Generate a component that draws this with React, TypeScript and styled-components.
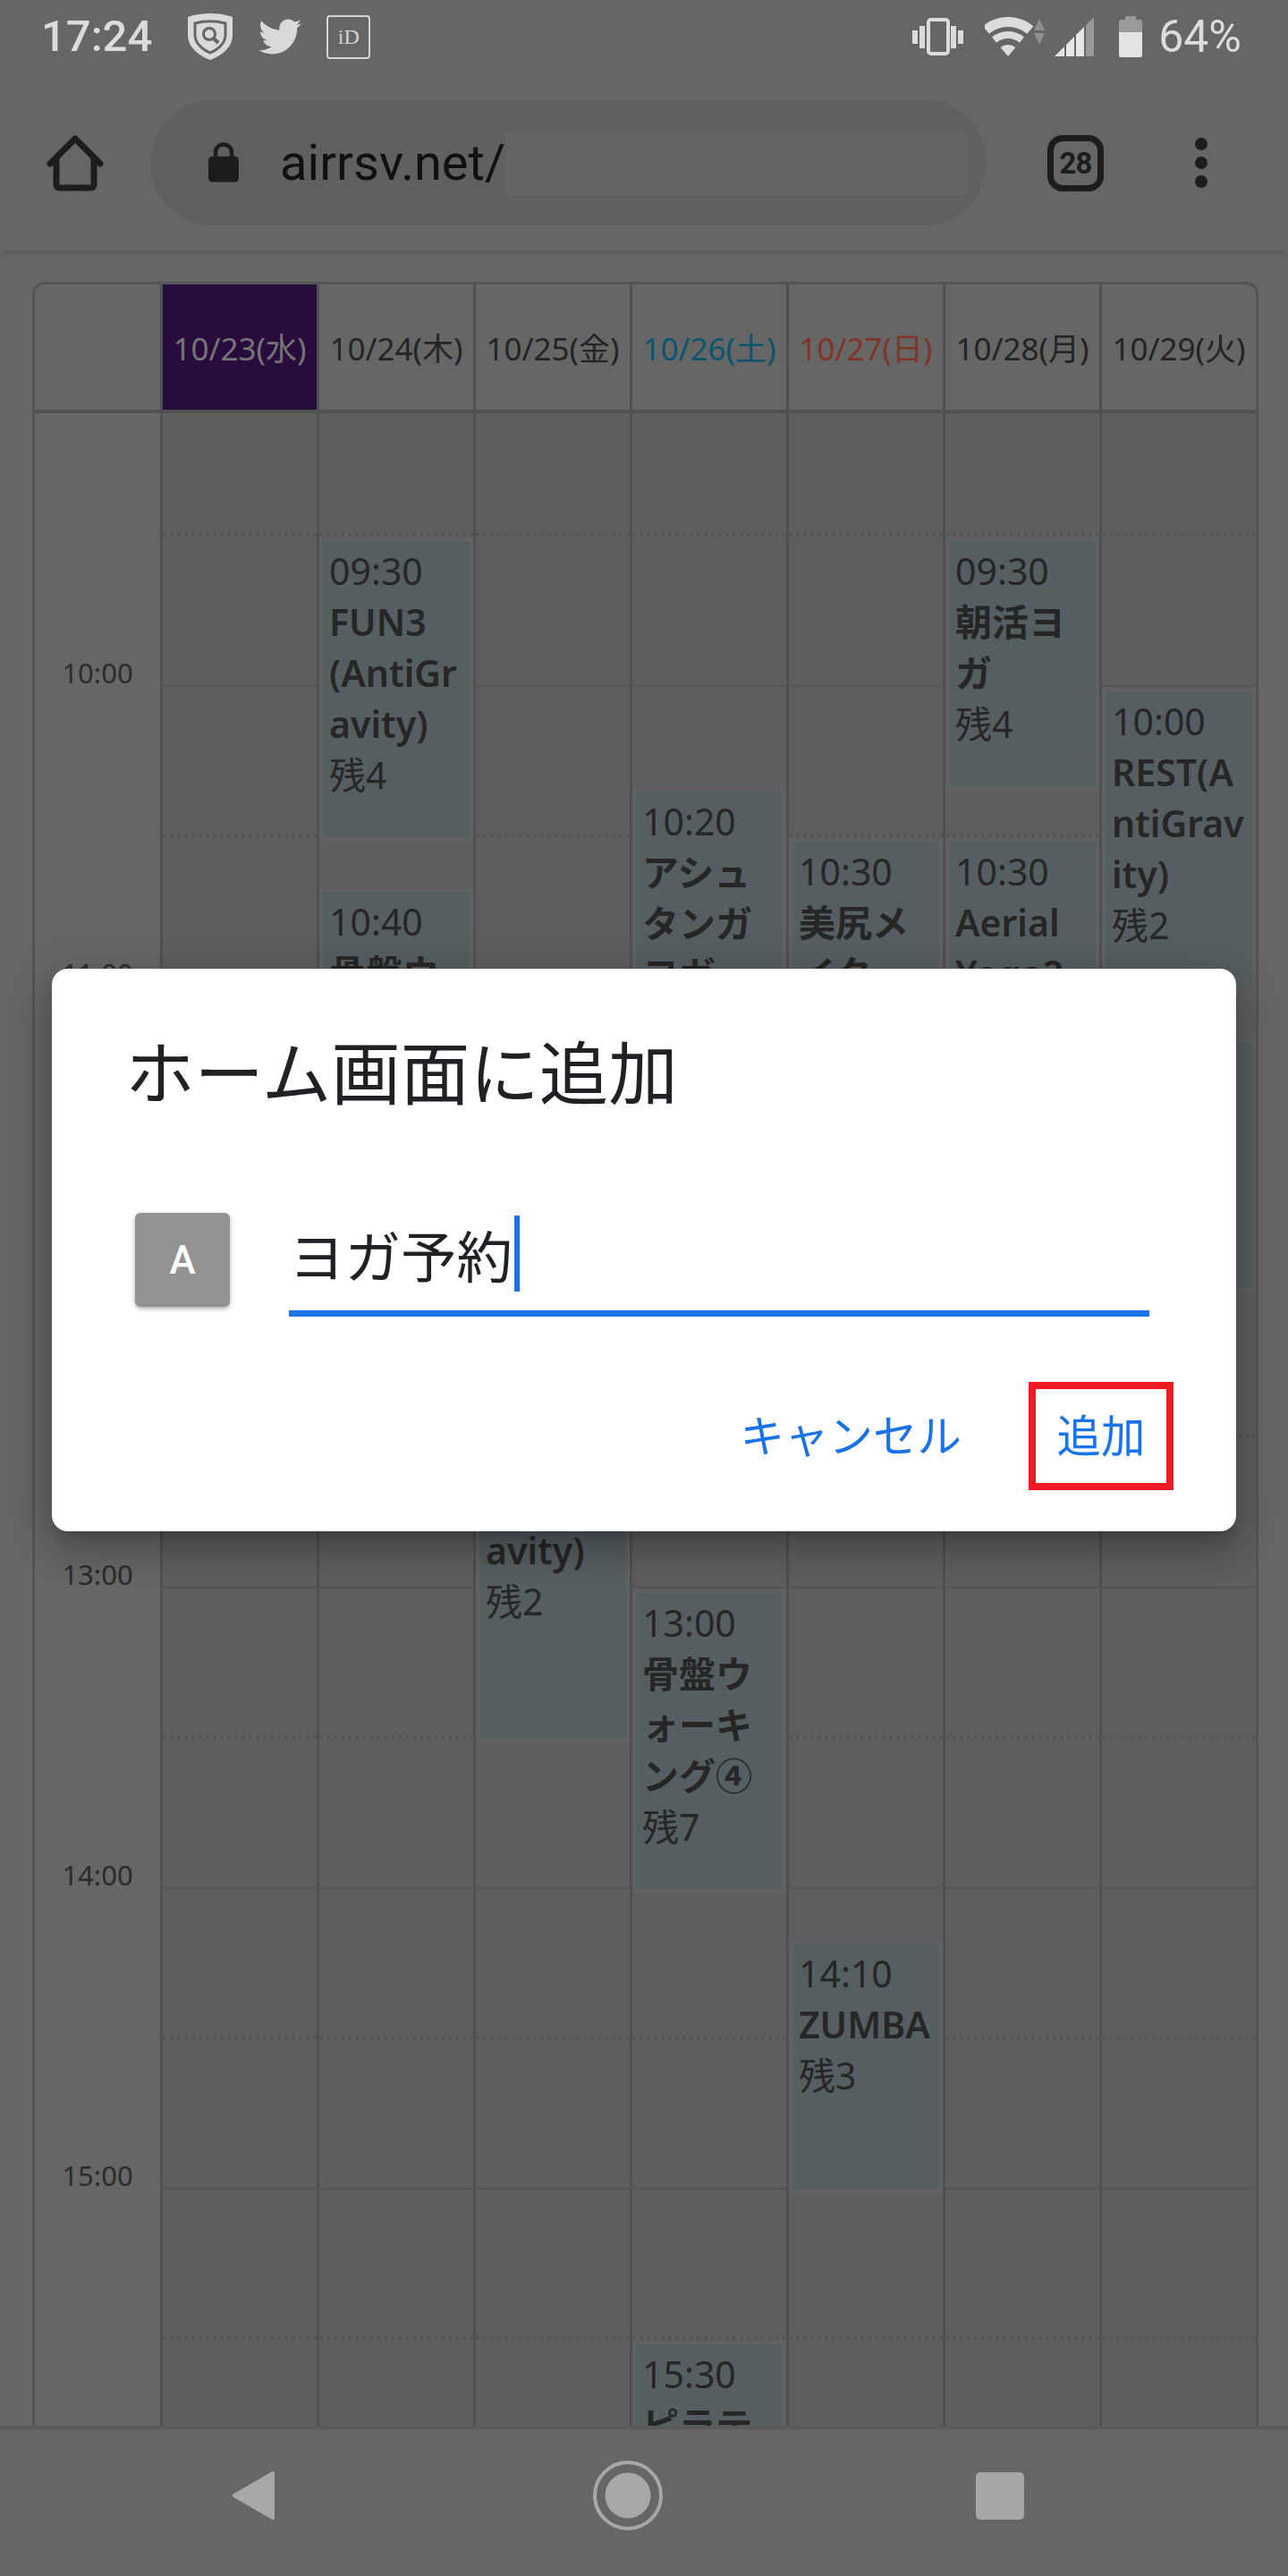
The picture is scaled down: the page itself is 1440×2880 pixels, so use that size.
import { FaTwitter } from "react-icons/fa";
import styled, { createGlobalStyle } from "styled-components";

const GlobalStyle = createGlobalStyle`
  * {
    box-sizing: border-box;
  }
  body {
    margin: 0;
    background: #666;
    font-family: "Noto Sans", "Noto Sans CJK JP", sans-serif;
  }
`;

const Page = styled.div`
  position: relative;
  display: flex;
  flex-direction: column;
  width: 1440px;
  height: 2880px;
  overflow: hidden;
  background: #666;
`;

/* status bar */
const StatusBar = styled.div`
  display: flex;
  align-items: flex-start;
  justify-content: space-between;
  height: 100px;
  padding: 0 52px 0 46px;
  color: #dcdcdc;
  font-family: Roboto, sans-serif;
`;
const StatusGroup = styled.div`
  display: flex;
  align-items: center;
  height: 82px;
`;
const Clock = styled.span`
  margin-right: 40px;
  font-size: 49px;
  font-weight: 500;
  line-height: 82px;
`;
const StatusIcon = styled.svg<{ $gap?: number }>`
  display: block;
  flex: none;
  margin-right: ${(p) => p.$gap ?? 0}px;
`;
const Bird = styled(FaTwitter)`
  flex: none;
  margin: 0 28px 0 29px;
  color: #d9d9d9;
`;
const IdBadge = styled.div`
  display: flex;
  align-items: center;
  justify-content: center;
  width: 49px;
  height: 49px;
  border: 2px solid #d4d4d4;
  border-radius: 4px;
  color: #d4d4d4;
  font-family: "Liberation Serif", serif;
  font-size: 24px;
`;
const Percent = styled.span`
  margin-left: 18px;
  font-size: 50px;
  line-height: 82px;
`;

/* browser toolbar */
const Toolbar = styled.div`
  position: relative;
  z-index: 1;
  display: flex;
  align-items: center;
  height: 180px;
  padding: 12px 0 28px 52px;
  background: #666;
  box-shadow: 0 7px 7px -4px rgba(0, 0, 0, 0.16);
`;
const Omnibox = styled.div`
  display: flex;
  align-items: center;
  width: 935px;
  height: 140px;
  margin: 0 68px 0 52px;
  padding-left: 65px;
  border-radius: 70px;
  background: #5f6062;
`;
const Address = styled.span`
  margin-left: 46px;
  color: #111;
  font-family: Roboto, sans-serif;
  font-size: 56px;
  line-height: 70px;
`;
const Redaction = styled.div`
  flex: none;
  width: 516px;
  height: 69px;
  margin: 3px 22px 0 auto;
  background: #656565;
`;
const TabCount = styled.div`
  display: flex;
  align-items: center;
  justify-content: center;
  width: 63px;
  height: 63px;
  margin-right: 102px;
  border: 7px solid #1c1d1f;
  border-radius: 17px;
  color: #1c1d1f;
  font-family: Roboto, sans-serif;
  font-size: 33px;
  font-weight: 700;
  letter-spacing: -1px;
`;
const MenuDots = styled.div`
  display: flex;
  flex-direction: column;
  gap: 7px;
`;
const MenuDot = styled.span`
  width: 14px;
  height: 14px;
  border-radius: 50%;
  background: #1c1d1f;
`;

/* timetable */
const Main = styled.main`
  flex: 1;
  min-height: 0;
  overflow: hidden;
  padding: 35px 33px 0 36px;
`;
const Table = styled.div`
  display: flex;
  width: 1371px;
  height: 100%;
  overflow: hidden;
  border: 3px solid #545454;
  border-bottom: none;
  border-radius: 14px 14px 0 0;
`;
const TimeColumn = styled.div`
  flex: none;
  width: 140px;
`;
const DayColumn = styled.div`
  flex: none;
  width: 175px;
  border-left: 3px solid #505050;
`;
const HeadCell = styled.div<{ $tone: string; $today?: boolean }>`
  display: flex;
  align-items: center;
  justify-content: center;
  height: 144px;
  padding-bottom: 1px;
  border-bottom: 4px solid #505050;
  background: ${(p) => (p.$today ? "#290c3e" : "transparent")};
  color: ${(p) => p.$tone};
  font-size: 35px;
  white-space: nowrap;
`;
const TimeLabel = styled.div<{ $first?: boolean }>`
  display: flex;
  align-items: flex-end;
  justify-content: center;
  height: ${(p) => (p.$first ? 304 : 336)}px;
  color: #2b2b2b;
  font-size: 31px;
  line-height: 28px;
`;
const DayBody = styled.div`
  position: relative;
  background: #5e5e5e;
`;
const Slot = styled.div<{ $half: boolean; $first: boolean }>`
  height: ${(p) => (p.$first ? 138 : 168)}px;
  border-bottom: ${(p) => (p.$half ? "4px dotted #545454" : "3px solid #575757")};
`;
const Lesson = styled.div<{ $top: number; $height: number }>`
  position: absolute;
  top: ${(p) => p.$top}px;
  left: 0;
  width: 172px;
  height: ${(p) => p.$height}px;
  overflow: hidden;
  padding: 5px 1px 0 7px;
  border: 4px solid #5f6264;
  background: #555e61;
  color: #262626;
  font-size: 41px;
  line-height: 57px;
  line-break: loose;
  overflow-wrap: anywhere;
`;
const LessonTitle = styled.div`
  font-weight: 600;
`;

/* dialog */
const Dialog = styled.div`
  position: absolute;
  top: 1083px;
  left: 58px;
  z-index: 2;
  width: 1324px;
  height: 629px;
  padding: 73px 70px 0 82px;
  border-radius: 18px;
  background: #fff;
  box-shadow: 0 24px 38px 3px rgba(0, 0, 0, 0.14), 0 9px 46px 8px rgba(0, 0, 0, 0.12),
    0 11px 15px -7px rgba(0, 0, 0, 0.2);
  font-family: "Noto Sans CJK JP", sans-serif;
`;
const DialogTitle = styled.h2`
  margin: 0;
  color: #202124;
  font-size: 77.5px;
  font-weight: 400;
  line-height: 78px;
`;
const FieldRow = styled.div`
  display: flex;
  align-items: flex-start;
  gap: 66px;
  margin: 118px 0 0 11px;
`;
const SiteIcon = styled.div`
  display: flex;
  align-items: center;
  justify-content: center;
  width: 106px;
  height: 105px;
  margin-top: 4px;
  border-radius: 6px;
  background: #939393;
  box-shadow: 0 2px 5px rgba(0, 0, 0, 0.35);
  color: #fff;
  font-family: Roboto, sans-serif;
  font-size: 44px;
  font-weight: 500;
`;
const Field = styled.div`
  display: flex;
  align-items: center;
  width: 962px;
  height: 120px;
  padding: 0 0 14px 0;
  border-bottom: 7px solid #1a73e8;
  color: #202124;
  font-size: 62.5px;
`;
const Caret = styled.span`
  width: 6px;
  height: 85px;
  margin-left: 2px;
  background: #1a73e8;
`;
const Actions = styled.div`
  display: flex;
  align-items: center;
  justify-content: flex-end;
  gap: 75px;
  margin-top: 73px;
`;
const ActionButton = styled.button<{ $marked?: boolean }>`
  display: flex;
  align-items: center;
  justify-content: center;
  width: ${(p) => (p.$marked ? "162px" : "auto")};
  height: 121px;
  padding: 0 0 6px;
  border: ${(p) => (p.$marked ? "8px solid #ed1c24" : "none")};
  background: none;
  color: #1a73e8;
  font-family: inherit;
  font-size: 49.5px;
`;

/* navigation bar */
const NavBar = styled.nav`
  display: flex;
  flex: none;
  align-items: center;
  height: 168px;
  padding: 0 0 16px 259px;
  border-top: 4px solid #5c5c5c;
  background: #666;
`;
const NavIcon = styled.svg<{ $gap: number }>`
  display: block;
  margin-right: ${(p) => p.$gap}px;
`;
const StopKey = styled.span`
  width: 54px;
  height: 53px;
  border-radius: 5px;
  background: #a6a6a6;
`;

interface LessonData {
  time: string;
  start: number;
  minutes: number;
  title?: string;
  left?: string;
}

interface DayData {
  label: string;
  tone: string;
  today?: boolean;
  lessons: LessonData[];
}

const at = (hour: number, minute: number) => hour * 60 + minute;

const days: DayData[] = [
  { label: "10/23(水)", tone: "#747474", today: true, lessons: [] },
  {
    label: "10/24(木)",
    tone: "#242424",
    lessons: [
      { time: "09:30", start: at(9, 30), minutes: 60, title: "FUN3 (AntiGravity)", left: "残4" },
      { time: "10:40", start: at(10, 40), minutes: 60, title: "骨盤ウォーキング" },
    ],
  },
  {
    label: "10/25(金)",
    tone: "#242424",
    lessons: [{ time: "12:15", start: at(12, 15), minutes: 75, title: "FUN3 (AntiGravity)", left: "残2" }],
  },
  {
    label: "10/26(土)",
    tone: "#0a5470",
    lessons: [
      { time: "10:20", start: at(10, 20), minutes: 60, title: "アシュタンガヨガ" },
      { time: "13:00", start: at(13, 0), minutes: 60, title: "骨盤ウォーキング④", left: "残7" },
      { time: "15:30", start: at(15, 30), minutes: 60, title: "ピラティス" },
    ],
  },
  {
    label: "10/27(日)",
    tone: "#7f3527",
    lessons: [
      { time: "10:30", start: at(10, 30), minutes: 60, title: "美尻メイク" },
      { time: "14:10", start: at(14, 10), minutes: 50, title: "ZUMBA", left: "残3" },
    ],
  },
  {
    label: "10/28(月)",
    tone: "#242424",
    lessons: [
      { time: "09:30", start: at(9, 30), minutes: 50, title: "朝活ヨガ", left: "残4" },
      { time: "10:30", start: at(10, 30), minutes: 60, title: "Aerial Yoga2" },
    ],
  },
  {
    label: "10/29(火)",
    tone: "#242424",
    lessons: [
      { time: "10:00", start: at(10, 0), minutes: 60, title: "REST(AntiGravity)", left: "残2" },
      { time: "11:10", start: at(11, 10), minutes: 50 },
    ],
  },
];

const hours = ["10:00", "11:00", "12:00", "13:00", "14:00", "15:00"];
const slots = Array.from({ length: 14 }, (_, i) => i);

const PX_PER_MINUTE = 5.6;
const lessonTop = (start: number) => 139 + (start - at(9, 30)) * PX_PER_MINUTE;

function StatusIcons() {
  return (
    <StatusGroup>
      <StatusIcon width="57" height="42" viewBox="0 0 57 42" $gap={24} fill="#dcdcdc">
        <rect x="0" y="14" width="6" height="15" />
        <rect x="8" y="9" width="6" height="25" />
        <rect x="18" y="2" width="22" height="38" rx="3" fill="none" stroke="#dcdcdc" strokeWidth="4" />
        <rect x="43" y="9" width="6" height="25" />
        <rect x="51" y="14" width="6" height="15" />
      </StatusIcon>
      <StatusIcon width="67" height="45" viewBox="0 0 67 45" $gap={11}>
        <path d="M1.2 14.5A38.5 38.5 0 0 1 50.8 14.5" fill="none" stroke="#dcdcdc" strokeWidth="11" />
        <path d="M10.6 25.6A24 24 0 0 1 41.4 25.6" fill="none" stroke="#dcdcdc" strokeWidth="8" />
        <path d="M26 44L17.6 34A13 13 0 0 1 34.4 34Z" fill="#dcdcdc" />
        <path d="M61 2L67 15H55Z M55 18H67L61 31Z" fill="#8f8f8f" />
      </StatusIcon>
      <StatusIcon width="44" height="44" viewBox="0 0 44 44" $gap={28} fill="#e6e6e6">
        <polygon points="0,44 11,33 11,44" />
        <polygon points="13,31 22,22 22,44 13,44" />
        <polygon points="24,20 33,11 33,44 24,44" />
        <polygon points="35,9 44,0 44,44 35,44" fill="#999" />
      </StatusIcon>
      <StatusIcon width="26" height="46" viewBox="0 0 26 46">
        <path d="M7 0H19V4H24Q26 4 26 6V18H0V6Q0 4 2 4H7Z" fill="#999" />
        <path d="M0 18H26V44Q26 46 24 46H2Q0 46 0 44Z" fill="#e3e3e3" />
      </StatusIcon>
      <Percent>64%</Percent>
    </StatusGroup>
  );
}

export default function App() {
  return (
    <Page>
      <GlobalStyle />
      <StatusBar>
        <StatusGroup>
          <Clock>17:24</Clock>
          <StatusIcon width="50" height="52" viewBox="0 0 50 52">
            <path d="M25 0C33 0 42 1 50 4V24C50 38 38 47 25 52C12 47 0 38 0 24V4C8 1 17 0 25 0Z" fill="#d9d9d9" />
            <path d="M8 11C19 8 31 8 42 11V24C42 33 34 40 25 44C16 40 8 33 8 24Z" fill="none" stroke="#666" strokeWidth="3" />
            <circle cx="24" cy="23" r="6.5" fill="none" stroke="#666" strokeWidth="3" />
            <path d="M29 28L34 33" stroke="#666" strokeWidth="4" />
          </StatusIcon>
          <Bird size={48} />
          <IdBadge>iD</IdBadge>
        </StatusGroup>
        <StatusIcons />
      </StatusBar>

      <Toolbar>
        <svg width="64" height="63" viewBox="0 0 64 63" fill="none" stroke="#1c1d1f" strokeWidth="7" strokeLinecap="round" strokeLinejoin="round">
          <path d="M4 32L32 4L60 32" />
          <path d="M11 26V55Q11 59 15 59H49Q53 59 53 55V26" />
        </svg>
        <Omnibox>
          <svg width="38" height="48" viewBox="0 0 38 48">
            <path d="M9 18V11A10 10 0 0 1 29 11V18" fill="none" stroke="#1c1d1f" strokeWidth="5" />
            <rect x="0" y="16" width="38" height="32" rx="5" fill="#1c1d1f" />
          </svg>
          <Address>airrsv.net/</Address>
          <Redaction />
        </Omnibox>
        <TabCount>28</TabCount>
        <MenuDots>
          <MenuDot />
          <MenuDot />
          <MenuDot />
        </MenuDots>
      </Toolbar>

      <Main>
        <Table>
          <TimeColumn>
            <HeadCell $tone="#242424" />
            {hours.map((hour, i) => (
              <TimeLabel key={hour} $first={i === 0}>
                {hour}
              </TimeLabel>
            ))}
          </TimeColumn>
          {days.map((day) => (
            <DayColumn key={day.label}>
              <HeadCell $tone={day.tone} $today={day.today}>
                {day.label}
              </HeadCell>
              <DayBody>
                {slots.map((i) => (
                  <Slot key={i} $first={i === 0} $half={i % 2 === 0} />
                ))}
                {day.lessons.map((lesson) => (
                  <Lesson
                    key={lesson.time}
                    $top={lessonTop(lesson.start)}
                    $height={lesson.minutes * PX_PER_MINUTE + 3}
                  >
                    <div>{lesson.time}</div>
                    {lesson.title && <LessonTitle>{lesson.title}</LessonTitle>}
                    {lesson.left && <div>{lesson.left}</div>}
                  </Lesson>
                ))}
              </DayBody>
            </DayColumn>
          ))}
        </Table>
      </Main>

      <NavBar>
        <NavIcon width="49" height="56" viewBox="0 0 49 56" $gap={355} fill="#a8a8a8">
          <path d="M46 3V53L3 28Z" stroke="#a8a8a8" strokeWidth="4" strokeLinejoin="round" />
        </NavIcon>
        <NavIcon width="78" height="78" viewBox="0 0 78 78" $gap={350} fill="#a8a8a8">
          <circle cx="39" cy="39" r="37" fill="none" stroke="#a8a8a8" strokeWidth="4" />
          <circle cx="39" cy="39" r="25.5" />
        </NavIcon>
        <StopKey />
      </NavBar>

      <Dialog>
        <DialogTitle>ホーム画面に追加</DialogTitle>
        <FieldRow>
          <SiteIcon>A</SiteIcon>
          <Field>
            ヨガ予約
            <Caret />
          </Field>
        </FieldRow>
        <Actions>
          <ActionButton>キャンセル</ActionButton>
          <ActionButton $marked>追加</ActionButton>
        </Actions>
      </Dialog>
    </Page>
  );
}
